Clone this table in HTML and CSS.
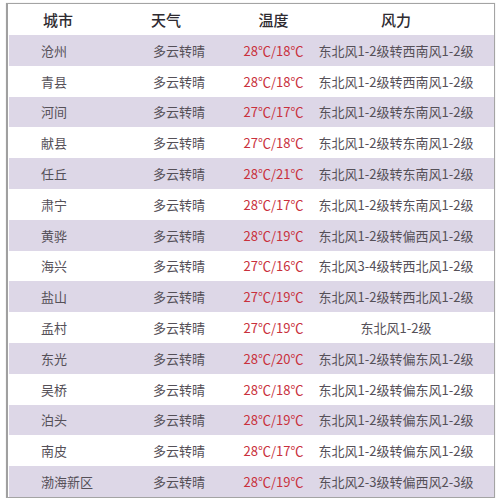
FILE: index.html
```html
<!DOCTYPE html>
<html lang="zh">
<head>
<meta charset="utf-8">
<link rel="stylesheet" href="styles.css">
</head>
<body>
<div class="frame">
  <div class="row head">
    <div class="c1">城市</div><div class="c2">天气</div><div class="c3">温度</div><div class="c4">风力</div>
  </div>
  <div class="row alt"><div class="c1">沧州</div><div class="c2">多云转晴</div><div class="c3 t">28℃/18℃</div><div class="c4">东北风1-2级转西南风1-2级</div></div>
  <div class="row"><div class="c1">青县</div><div class="c2">多云转晴</div><div class="c3 t">28℃/18℃</div><div class="c4">东北风1-2级转西南风1-2级</div></div>
  <div class="row alt"><div class="c1">河间</div><div class="c2">多云转晴</div><div class="c3 t">27℃/17℃</div><div class="c4">东北风1-2级转东南风1-2级</div></div>
  <div class="row"><div class="c1">献县</div><div class="c2">多云转晴</div><div class="c3 t">27℃/18℃</div><div class="c4">东北风1-2级转东南风1-2级</div></div>
  <div class="row alt"><div class="c1">任丘</div><div class="c2">多云转晴</div><div class="c3 t">28℃/21℃</div><div class="c4">东北风1-2级转东南风1-2级</div></div>
  <div class="row"><div class="c1">肃宁</div><div class="c2">多云转晴</div><div class="c3 t">28℃/17℃</div><div class="c4">东北风1-2级转东南风1-2级</div></div>
  <div class="row alt"><div class="c1">黄骅</div><div class="c2">多云转晴</div><div class="c3 t">28℃/19℃</div><div class="c4">东北风1-2级转偏西风1-2级</div></div>
  <div class="row"><div class="c1">海兴</div><div class="c2">多云转晴</div><div class="c3 t">27℃/16℃</div><div class="c4">东北风3-4级转西北风1-2级</div></div>
  <div class="row alt"><div class="c1">盐山</div><div class="c2">多云转晴</div><div class="c3 t">27℃/19℃</div><div class="c4">东北风1-2级转西北风1-2级</div></div>
  <div class="row"><div class="c1">孟村</div><div class="c2">多云转晴</div><div class="c3 t">27℃/19℃</div><div class="c4">东北风1-2级</div></div>
  <div class="row alt"><div class="c1">东光</div><div class="c2">多云转晴</div><div class="c3 t">28℃/20℃</div><div class="c4">东北风1-2级转偏东风1-2级</div></div>
  <div class="row"><div class="c1">吴桥</div><div class="c2">多云转晴</div><div class="c3 t">28℃/18℃</div><div class="c4">东北风1-2级转偏东风1-2级</div></div>
  <div class="row alt"><div class="c1">泊头</div><div class="c2">多云转晴</div><div class="c3 t">28℃/19℃</div><div class="c4">东北风1-2级转偏东风1-2级</div></div>
  <div class="row"><div class="c1">南皮</div><div class="c2">多云转晴</div><div class="c3 t">28℃/17℃</div><div class="c4">东北风1-2级转偏东风1-2级</div></div>
  <div class="row alt"><div class="c1">渤海新区</div><div class="c2">多云转晴</div><div class="c3 t">28℃/19℃</div><div class="c4">东北风2-3级转偏西风2-3级</div></div>
</div>
</body>
</html>
```

FILE: styles.css
```css
html, body {
  margin: 0;
  padding: 0;
  background: #ffffff;
}
body {
  font-family: "Noto Sans CJK SC", "Noto Sans", sans-serif;
  color: #555058;
}
.frame {
  margin: 3px 0 0 6px;
  width: 485px;
  border: 1px solid #a4a4a4;
  border-left: 2px solid #a0a0a0;
  box-shadow: 0 0 1px #cccccc;
  padding-left: 1px;
}
.row {
  display: grid;
  grid-template-columns: 132px 90px 85px 160px;
  height: 30.8px;
  align-items: center;
  font-size: 13px;
}
.row.alt {
  background: #ddd7e7;
}
.row.head {
  height: 31px;
  font-size: 15px;
  font-weight: 500;
  color: #2e2b31;
}
.c1 {
  padding-left: 32px;
}
.c2 {
  padding-left: 12px;
}
.head .c1 {
  padding-left: 34px;
}
.head .c2 {
  padding-left: 10px;
}
.c3, .c4 {
  text-align: center;
  white-space: nowrap;
}
.t {
  color: #c9303c;
}
```
